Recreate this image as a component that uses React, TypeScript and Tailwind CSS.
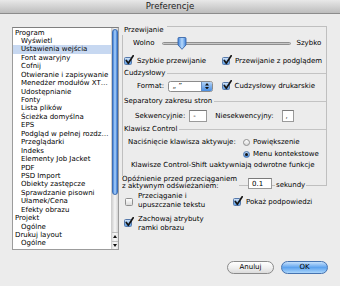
import React from 'react'

const items: { t: string; sub?: boolean; sel?: boolean }[] = [
  { t: 'Program' },
  { t: 'Wyświetl', sub: true },
  { t: 'Ustawienia wejścia', sub: true, sel: true },
  { t: 'Font awaryjny', sub: true },
  { t: 'Cofnij', sub: true },
  { t: 'Otwieranie i zapisywanie', sub: true },
  { t: 'Menedżer modułów XT…', sub: true },
  { t: 'Udostępnianie', sub: true },
  { t: 'Fonty', sub: true },
  { t: 'Lista plików', sub: true },
  { t: 'Ścieżka domyślna', sub: true },
  { t: 'EPS', sub: true },
  { t: 'Podgląd w pełnej rozdz…', sub: true },
  { t: 'Przeglądarki', sub: true },
  { t: 'Indeks', sub: true },
  { t: 'Elementy Job Jacket', sub: true },
  { t: 'PDF', sub: true },
  { t: 'PSD Import', sub: true },
  { t: 'Obiekty zastępcze', sub: true },
  { t: 'Sprawdzanie pisowni', sub: true },
  { t: 'Ułamek/Cena', sub: true },
  { t: 'Efekty obrazu', sub: true },
  { t: 'Projekt' },
  { t: 'Ogólne', sub: true },
  { t: 'Drukuj layout' },
  { t: 'Ogólne', sub: true },
]

function Check({ on }: { on?: boolean }) {
  return (
    <span className="relative block w-[8px] h-[8px] shrink-0">
      <span
        className={
          on
            ? 'absolute inset-0 rounded-[1.5px] border border-[#5679ab] bg-linear-to-b from-[#cfe2f7] via-[#93bff0] to-[#5d9fe4]'
            : 'absolute inset-0 rounded-[1.5px] border border-[#8f8f8f] bg-linear-to-b from-white to-[#dadada]'
        }
      />
      {on && (
        <svg className="absolute left-[1px] -top-[2px]" width="9" height="10" viewBox="0 0 9 10">
          <path d="M1.3 5.4 L3.3 8.3 L8.2 0.8" stroke="#151515" strokeWidth="1.7" fill="none" strokeLinecap="round" strokeLinejoin="round" />
        </svg>
      )}
    </span>
  )
}

function Radio({ on }: { on?: boolean }) {
  return (
    <span
      className={
        on
          ? 'flex items-center justify-center w-[7px] h-[7px] rounded-full border border-[#4d76ad] bg-linear-to-b from-[#bcd6f5] to-[#4b8fe0] shrink-0'
          : 'flex items-center justify-center w-[7px] h-[7px] rounded-full border border-[#8f8f8f] bg-linear-to-b from-white to-[#dadada] shrink-0'
      }
    >
      {on && <span className="w-[2.5px] h-[2.5px] rounded-full bg-[#141414]" />}
    </span>
  )
}

function Section({ label, className }: { label: string; className: string }) {
  return (
    <div className={`flex items-center h-[9px] ${className}`}>
      <span className="pl-[1px] pr-[2px] leading-[9px]">{label}</span>
      <span className="flex-1 h-px bg-[#c3c3c3]" />
    </div>
  )
}

export default function App() {
  return (
    <div className="w-[340px] h-[286px] overflow-hidden bg-[#ececec] text-black text-[7px] font-['DejaVu_Sans',sans-serif]">
      {/* title bar */}
      <div className="h-[14px] flex items-center justify-center border-b border-[#8c8c8c] bg-linear-to-b from-[#e8e8e8] to-[#bdbdbd] text-[8.6px] text-[#222]">
        Preferencje
      </div>

      <div className="flex items-start pl-[12px] pt-[12px]">
        {/* list */}
        <div className="mt-[1px] w-[107px] h-[223px] flex border border-[#9c9c9c] border-t-[#7f7f7f] bg-white">
          <div className="flex-1 pt-[0.5px]">
            {items.map((it, i) => (
              <div
                key={i}
                className={`h-[8.45px] leading-[8.45px] whitespace-nowrap ${it.sub ? 'pl-[8px]' : 'pl-[2px]'} ${it.sel ? 'bg-[#c7d8f1]' : ''}`}
              >
                {it.t}
              </div>
            ))}
          </div>
          <div className="w-[7px] flex flex-col border-l border-[#cfcfcf]">
            <div className="flex-1 pt-[1px] pb-[1px] bg-linear-to-r from-[#d2d2d2] via-[#f6f6f6] to-[#d2d2d2]">
              <div className="h-[166px] rounded-full border border-[#3d6eb2] bg-linear-to-r from-[#3e7fd9] via-[#afd4f9] to-[#3e7fd9]" />
            </div>
            <div className="h-[8.5px] flex items-center justify-center border-t border-[#bdbdbd] bg-linear-to-r from-[#e2e2e2] via-[#fafafa] to-[#e2e2e2]">
              <svg width="4" height="3" viewBox="0 0 4 3"><path d="M2 0 L4 3 L0 3Z" fill="#111" /></svg>
            </div>
            <div className="h-[8.5px] flex items-center justify-center border-t border-[#bdbdbd] bg-linear-to-r from-[#e2e2e2] via-[#fafafa] to-[#e2e2e2]">
              <svg width="4" height="3" viewBox="0 0 4 3"><path d="M0 0 L4 0 L2 3Z" fill="#111" /></svg>
            </div>
          </div>
        </div>

        {/* right panel */}
        <div className="ml-[3px] w-[205px] flex flex-col">
          <div className="flex flex-col border border-[#bfbfbf]">
            <div className="-mt-px -ml-px h-[9px] flex">
              <span className="bg-[#ececec] pl-[2px] pr-[3px] leading-[9px]">Przewijanie</span>
            </div>

            <div className="mt-[1px] h-[14px] flex items-center pl-[10px]">
              <span>Wolno</span>
              <div className="relative ml-[8px] w-[129px] h-[3px] rounded-full border border-[#8f8f8f] bg-linear-to-b from-[#a9a9a9] to-[#e6e6e6]">
                <svg className="absolute left-[14px] -top-[6px]" width="10" height="13" viewBox="0 0 10 13">
                  <defs>
                    <linearGradient id="thumb" x1="0" y1="0" x2="1" y2="0">
                      <stop offset="0" stopColor="#3f82dc" />
                      <stop offset="0.5" stopColor="#b6d9fb" />
                      <stop offset="1" stopColor="#3f82dc" />
                    </linearGradient>
                  </defs>
                  <path d="M1 1.5 Q1 0.5 2 0.5 L8 0.5 Q9 0.5 9 1.5 L9 8 L5 12.3 L1 8 Z" fill="url(#thumb)" stroke="#3b68a8" strokeWidth="0.9" />
                </svg>
              </div>
              <span className="ml-[5px]">Szybko</span>
            </div>

            <div className="mt-[5px] h-[12px] flex items-center">
              <div className="w-[99px] flex items-center">
                <span className="ml-[1px]"><Check on /></span>
                <span className="ml-[5px]">Szybkie przewijanie</span>
              </div>
              <Check on />
              <span className="ml-[5px]">Przewijanie z podglądem</span>
            </div>

            <Section label="Cudzysłowy" className="mt-[2px]" />

            <div className="mt-[2px] h-[12px] flex items-center pl-[14px]">
              <span>Format:</span>
              <div className="ml-[3.5px] w-[45px] h-[11px] flex overflow-hidden rounded-[2.5px] border border-[#8c8c8c] bg-white">
                <span className="flex-1 pl-[4px] leading-[9px]">„ ”</span>
                <span className="w-[11px] flex flex-col items-center justify-center gap-[1px] border-l border-[#6a8dbf] bg-linear-to-b from-[#b0d1f5] to-[#4a8fe1]">
                  <svg width="4" height="2.5" viewBox="0 0 4 2.5"><path d="M2 0 L4 2.5 L0 2.5Z" fill="#111" /></svg>
                  <svg width="4" height="2.5" viewBox="0 0 4 2.5"><path d="M0 0 L4 0 L2 2.5Z" fill="#111" /></svg>
                </span>
              </div>
              <span className="ml-[9px]"><Check on /></span>
              <span className="ml-[5px]">Cudzysłowy drukarskie</span>
            </div>

            <Section label="Separatory zakresu stron" className="mt-[5px]" />

            <div className="mt-[4px] h-[12px] flex items-center pl-[12px]">
              <span>Sekwencyjnie:</span>
              <span className="ml-[4px] w-[18px] h-[12px] pl-[3px] leading-[11px] border border-[#9a9a9a] border-t-[#7a7a7a] bg-white">-</span>
              <span className="ml-[8px]">Niesekwencyjny:</span>
              <span className="ml-[8px] w-[12px] h-[12px] pl-[3px] leading-[10px] border border-[#9a9a9a] border-t-[#7a7a7a] bg-white">,</span>
            </div>

            <Section label="Klawisz Control" className="mt-[3px]" />

            <div className="mt-[4px] h-[9px] flex items-center">
              <span className="w-[120px] pl-[5px] whitespace-nowrap">Naciśnięcie klawisza aktywuje:</span>
              <Radio />
              <span className="ml-[3px]">Powiększenie</span>
            </div>
            <div className="mt-[3px] h-[9px] flex items-center pl-[120px]">
              <Radio on />
              <span className="ml-[3px] whitespace-nowrap">Menu kontekstowe</span>
            </div>
            <div className="mt-[2px] h-[9px] flex items-center pl-[8px] whitespace-nowrap">
              Klawisze Control-Shift uaktywniają odwrotne funkcje
            </div>

            <div className="mt-[6px] -mb-[6px] h-[15px] flex items-center">
              <div className="-ml-px w-[126px]">
                <span className="inline-block bg-[#ececec] pr-[2px] leading-[7.4px] whitespace-nowrap">
                  Opóźnienie przed przeciąganiem
                  <br />z aktywnym odświeżaniem:
                </span>
              </div>
              <span className="w-[24px] h-[11px] pl-[3px] leading-[10px] border border-[#9a9a9a] border-t-[#7a7a7a] bg-white">0.1</span>
              <span className="ml-[3px] px-[1px] bg-[#ececec] mt-[3px] leading-[8px]">sekundy</span>
            </div>
          </div>

          <div className="mt-[5.5px] flex">
            <div className="w-[111px] flex flex-col">
              <div className="flex items-start">
                <span className="mt-[6.5px] ml-[3px]"><Check /></span>
                <span className="ml-[5px] leading-[9px]">
                  Przeciąganie i
                  <br />
                  upuszczanie tekstu
                </span>
              </div>
              <div className="mt-[5px] flex items-start">
                <span className="mt-[4.5px] ml-[2px]"><Check on /></span>
                <span className="ml-[6px] leading-[9px]">
                  Zachowaj atrybuty
                  <br />
                  ramki obrazu
                </span>
              </div>
            </div>
            <div className="flex items-start">
              <span className="mt-[6.5px]"><Check on /></span>
              <span className="ml-[5px] mt-[6px] leading-[9px]">Pokaż podpowiedzi</span>
            </div>
          </div>
        </div>
      </div>

      {/* buttons */}
      <div className="mt-[11px] flex justify-end gap-[7px] pr-[12px]">
        <button className="w-[47px] h-[13px] flex items-center justify-center rounded-full border border-[#8a8a8a] bg-linear-to-b from-white via-[#f0f0f0] to-[#dcdcdc] text-[7px] leading-none">
          Anuluj
        </button>
        <button className="w-[47px] h-[13px] flex items-center justify-center rounded-full border border-[#4673b0] bg-linear-to-b from-[#c5e0fb] via-[#5ea3ee] to-[#a9d5fb] text-[7px] leading-none">
          OK
        </button>
      </div>
    </div>
  )
}
